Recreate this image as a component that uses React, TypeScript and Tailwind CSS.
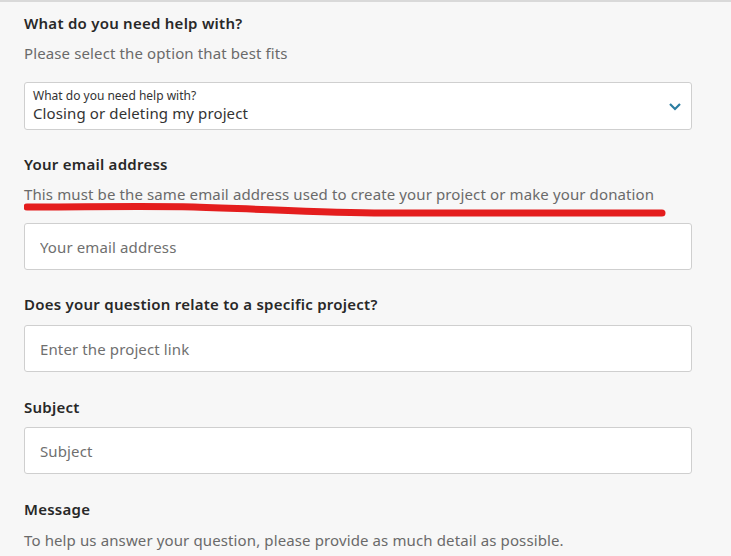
import React from 'react';

const font = { fontFamily: '"Noto Sans", Lato, sans-serif' };

const Label = ({ children }: { children: React.ReactNode }) => (
  <div className="text-[15px] font-semibold text-[#282828] leading-[20px] tracking-[0.25px]">{children}</div>
);

const Help = ({ children }: { children: React.ReactNode }) => (
  <div className="text-[15px] text-[#6a6a6a] leading-[20px] tracking-[0.12px]">{children}</div>
);

const TextField = ({ placeholder }: { placeholder: string }) => (
  <input
    placeholder={placeholder}
    className="w-[668px] h-[47px] rounded-[3px] border border-[#cfcfcf] bg-white px-[15px] text-[15px] tracking-[0.12px] text-[#333] placeholder:text-[#6f6f6f] outline-none"
  />
);

export default function App() {
  return (
    <div className="min-h-[556px] w-full bg-[#f7f7f7] border-t-2 border-[#d9d9d9] overflow-hidden" style={font}>
      <div className="px-6 pt-[11px] flex flex-col">
        <Label>What do you need help with?</Label>
        <div className="mt-[10px]"><Help>Please select the option that best fits</Help></div>

        {/* select */}
        <div className="mt-[19px] w-[668px] h-[48px] rounded-[3px] border border-[#cfcfcf] bg-white flex items-center justify-between pl-[8px] pr-[8px]">
          <div className="flex flex-col">
            <span className="text-[12px] leading-[14px] text-[#333]">What do you need help with?</span>
            <span className="text-[15px] leading-[20px] tracking-[0.12px] text-[#333]">Closing or deleting my project</span>
          </div>
          <svg width="14" height="10" viewBox="0 0 14 10" className="mr-[1px]">
            <path d="M2 3 L7 8 L12 3" fill="none" stroke="#2b7ea1" strokeWidth="2.2" />
          </svg>
        </div>

        <div className="mt-[24px]"><Label>Your email address</Label></div>
        <div className="relative mt-[10px]">
          <Help>This must be the same email address used to create your project or make your donation</Help>
          <svg className="absolute left-0 top-[15px]" width="670" height="20" viewBox="0 0 670 20">
            <path
              d="M3 8 C 60 8, 120 7, 170 8 C 240 10, 300 14, 360 14 C 450 14, 560 14, 638 14"
              fill="none"
              stroke="#e41d1d"
              strokeWidth="7"
              strokeLinecap="round"
            />
          </svg>
        </div>
        <div className="mt-[19px]"><TextField placeholder="Your email address" /></div>

        <div className="mt-[24px]"><Label>Does your question relate to a specific project?</Label></div>
        <div className="mt-[11px]"><TextField placeholder="Enter the project link" /></div>

        <div className="mt-[25px]"><Label>Subject</Label></div>
        <div className="mt-[10px]"><TextField placeholder="Subject" /></div>

        <div className="mt-[25px]"><Label>Message</Label></div>
        <div className="mt-[11px]"><Help>To help us answer your question, please provide as much detail as possible.</Help></div>
      </div>
    </div>
  );
}
